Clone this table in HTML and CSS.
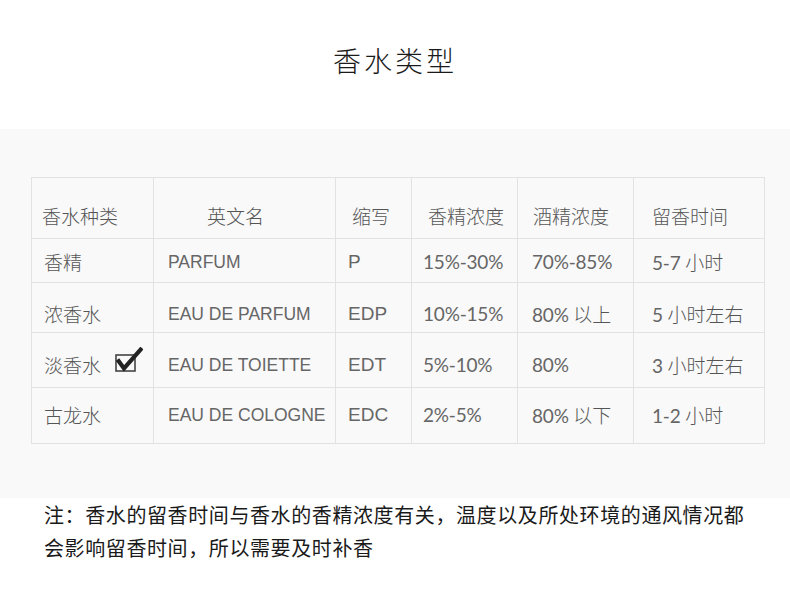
FILE: index.html
```html
<!DOCTYPE html>
<html lang="zh-CN">
<head>
<meta charset="utf-8">
<title>香水类型</title>
<link rel="stylesheet" href="styles.css">
</head>
<body>
<header class="title">香水类型</header>
<section class="band">
  <table class="grid">
    <colgroup>
      <col class="w1"><col class="w2"><col class="w3"><col class="w4"><col class="w5"><col class="w6">
    </colgroup>
    <tr class="r0">
      <th class="h1">香水种类</th><th class="h2">英文名</th><th class="h3">缩写</th><th class="h4">香精浓度</th><th class="h5">酒精浓度</th><th class="h6">留香时间</th>
    </tr>
    <tr class="r1">
      <td class="c1">香精</td><td class="c2">PARFUM</td><td class="c3">P</td><td class="c4 num">15%-30%</td><td class="c5 num">70%-85%</td><td class="c6 num">5-7 <span class="cn">小时</span></td>
    </tr>
    <tr class="r2">
      <td class="c1">浓香水</td><td class="c2">EAU DE PARFUM</td><td class="c3">EDP</td><td class="c4 num">10%-15%</td><td class="c5 num">80% <span class="cn">以上</span></td><td class="c6 num">5 <span class="cn">小时左右</span></td>
    </tr>
    <tr class="r3">
      <td class="c1">淡香水<svg class="check" width="28" height="26" viewBox="0 0 28 26" aria-hidden="true"><rect x="1" y="8" width="19" height="16" fill="none" stroke="#444" stroke-width="1.6"/><path d="M2.5 12.5 L9 21.5 L27 1" fill="none" stroke="#222" stroke-width="4.2" stroke-linejoin="miter"/></svg></td><td class="c2">EAU DE TOIETTE</td><td class="c3">EDT</td><td class="c4 num">5%-10%</td><td class="c5 num">80%</td><td class="c6 num">3 <span class="cn">小时左右</span></td>
    </tr>
    <tr class="r4">
      <td class="c1">古龙水</td><td class="c2">EAU DE COLOGNE</td><td class="c3">EDC</td><td class="c4 num">2%-5%</td><td class="c5 num">80% <span class="cn">以下</span></td><td class="c6 num">1-2 <span class="cn">小时</span></td>
    </tr>
  </table>
</section>
<p class="note">注：香水的留香时间与香水的香精浓度有关，温度以及所处环境的通风情况都<br>会影响留香时间，所以需要及时补香</p>
</body>
</html>
```
FILE: styles.css
```css
html, body {
  margin: 0;
  padding: 0;
  background: #ffffff;
}
body {
  width: 790px;
  font-family: "Noto Sans CJK SC", "Liberation Sans", sans-serif;
}
.title {
  box-sizing: border-box;
  height: 129px;
  padding-top: 44px;
  text-align: center;
  font-size: 28px;
  line-height: 32px;
  letter-spacing: 3px;
  font-weight: 300;
  color: #1a1a1a;
}
.band {
  box-sizing: border-box;
  height: 369px;
  background: #f9f9f9;
  padding-top: 48px;
  padding-left: 31px;
}
.grid {
  border-collapse: collapse;
  table-layout: fixed;
  width: 734px;
  border: 1px solid #dedede;
  color: #555;
}
.w1 { width: 122px; }
.w2 { width: 182px; }
.w3 { width: 76px; }
.w4 { width: 106px; }
.w5 { width: 116px; }
.w6 { width: 131px; }
.grid th, .grid td {
  border: 1px solid #e2e2e2;
  vertical-align: top;
  text-align: left;
  padding: 0;
  white-space: nowrap;
  font-weight: 300;
  font-size: 19px;
  line-height: 20px;
}
.r0 { height: 61px; }
.r1 { height: 44px; }
.r2 { height: 50px; }
.r3 { height: 55px; }
.r4 { height: 56px; }
.r0 th { padding-top: 28px; }
.r1 td { padding-top: 13px; }
.r2 td { padding-top: 21px; }
.r3 td { padding-top: 22px; }
.r4 td { padding-top: 17px; }
.h1 { padding-left: 10px !important; }
.h2 { padding-left: 53px !important; }
.h3 { padding-left: 16px !important; }
.h4 { padding-left: 16px !important; }
.h5 { padding-left: 15px !important; }
.h6 { padding-left: 18px !important; }
.c1 { padding-left: 12px !important; }
.c2 {
  padding-left: 14px !important;
  font-family: "Liberation Sans", Arial, sans-serif;
  font-weight: 400 !important;
  font-size: 17.5px !important;
  color: #666;
}
.c3 {
  padding-left: 12px !important;
  font-family: "Liberation Sans", Arial, sans-serif;
  font-weight: 400 !important;
  color: #666;
}
.c4 { padding-left: 11px !important; }
.c5 { padding-left: 14px !important; }
.c6 { padding-left: 18px !important; }
.num {
  font-family: "Lato", "Noto Sans CJK SC", sans-serif;
  font-weight: 400 !important;
  font-size: 19px !important;
  letter-spacing: -0.2px;
  color: #666;
}
.num .cn {
  font-family: "Noto Sans CJK SC", sans-serif;
  font-weight: 300;
  letter-spacing: 0;
  color: #555;
}
.check {
  display: inline-block;
  vertical-align: top;
  margin-left: 14px;
  margin-top: -8px;
}
.note {
  margin: 0;
  padding: 0 0 0 44px;
  font-size: 20px;
  line-height: 33px;
  letter-spacing: 0.6px;
  color: #1a1a1a;
}
```
